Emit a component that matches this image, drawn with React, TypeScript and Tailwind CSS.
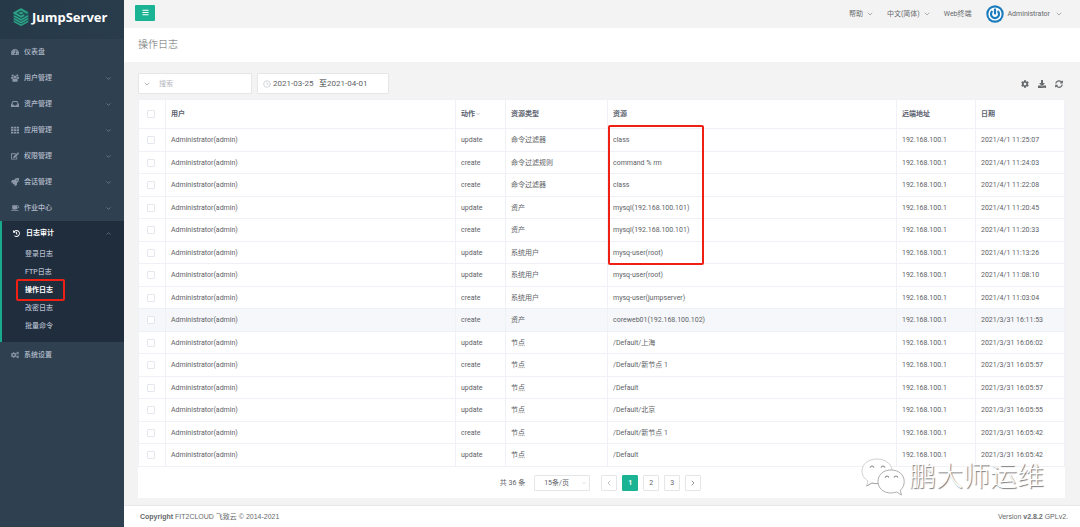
import React from 'react';
import {
  FaBars,
  FaTachometerAlt,
  FaEdit,
  FaRocket,
  FaCoffee,
  FaHistory,
  FaCogs,
  FaCog,
  FaDownload,
  FaSyncAlt,
} from 'react-icons/fa';
import { ChevronDown, ChevronLeft, ChevronRight, ChevronUp, Clock } from 'lucide-react';

function UsersIcon({ className }: { className?: string }) {
  return (
    <svg viewBox="0 0 16 16" className={className} fill="currentColor">
      <circle cx="3.5" cy="3" r="2.2" />
      <circle cx="12.5" cy="3" r="2.2" />
      <circle cx="8" cy="5.8" r="3" />
      <path d="M0 9.5 V7.5 Q0 5.5 1.5 5.5 L4.5 6 Q4.5 8 5.5 9 L3.5 9.5 Z" />
      <path d="M16 9.5 V7.5 Q16 5.5 14.5 5.5 L11.5 6 Q11.5 8 10.5 9 L12.5 9.5 Z" />
      <path d="M2.5 13.5 Q2.5 9.2 5 9.2 Q8 11 11 9.2 Q13.5 9.2 13.5 13.5 Q13.5 15.5 11.5 15.5 H4.5 Q2.5 15.5 2.5 13.5 Z" />
    </svg>
  );
}

function InboxIcon({ className }: { className?: string }) {
  return (
    <svg viewBox="0 0 16 16" className={className} fill="currentColor" fillRule="evenodd">
      <path d="M3.5 2 H12.5 L16 9 V14 H0 V9 Z M4.7 4 L2.2 9 H5 L6 11 H10 L11 9 H13.8 L11.3 4 Z" />
    </svg>
  );
}

function GridIcon({ className }: { className?: string }) {
  return (
    <svg viewBox="0 0 16 16" className={className} fill="currentColor">
      {[1.5, 6.5, 11.5].map((y) => (
        <path key={y} d={`M0 ${y} h4.6 v3.4 h-4.6 Z M5.7 ${y} h4.6 v3.4 h-4.6 Z M11.4 ${y} h4.6 v3.4 h-4.6 Z`} />
      ))}
    </svg>
  );
}

const menu = [
  { label: '仪表盘', icon: FaTachometerAlt, expandable: false },
  { label: '用户管理', icon: UsersIcon, expandable: true },
  { label: '资产管理', icon: InboxIcon, expandable: true },
  { label: '应用管理', icon: GridIcon, expandable: true },
  { label: '权限管理', icon: FaEdit, expandable: true },
  { label: '会话管理', icon: FaRocket, expandable: true },
  { label: '作业中心', icon: FaCoffee, expandable: true },
];

const auditMenu = ['登录日志', 'FTP日志', '操作日志', '改密日志', '批量命令'];

const logs = [
  { action: 'update', type: '命令过滤器', resource: 'class', date: '2021/4/1 11:25:07' },
  { action: 'create', type: '命令过滤规则', resource: 'command % rm', date: '2021/4/1 11:24:03' },
  { action: 'create', type: '命令过滤器', resource: 'class', date: '2021/4/1 11:22:08' },
  { action: 'update', type: '资产', resource: 'mysql(192.168.100.101)', date: '2021/4/1 11:20:45' },
  { action: 'create', type: '资产', resource: 'mysql(192.168.100.101)', date: '2021/4/1 11:20:33' },
  { action: 'update', type: '系统用户', resource: 'mysq-user(root)', date: '2021/4/1 11:13:26' },
  { action: 'update', type: '系统用户', resource: 'mysq-user(root)', date: '2021/4/1 11:08:10' },
  { action: 'create', type: '系统用户', resource: 'mysq-user(jumpserver)', date: '2021/4/1 11:03:04' },
  { action: 'create', type: '资产', resource: 'coreweb01(192.168.100.102)', date: '2021/3/31 16:11:53' },
  { action: 'update', type: '节点', resource: '/Default/上海', date: '2021/3/31 16:06:02' },
  { action: 'create', type: '节点', resource: '/Default/新节点 1', date: '2021/3/31 16:05:57' },
  { action: 'update', type: '节点', resource: '/Default', date: '2021/3/31 16:05:57' },
  { action: 'update', type: '节点', resource: '/Default/北京', date: '2021/3/31 16:05:55' },
  { action: 'create', type: '节点', resource: '/Default/新节点 1', date: '2021/3/31 16:05:42' },
  { action: 'update', type: '节点', resource: '/Default', date: '2021/3/31 16:05:42' },
];

const cell = 'border-r border-b border-[#eff1f6] px-[5px] text-left';
const checkCell = 'border-r border-b border-[#eff1f6] pr-[2px]';

function Logo() {
  return (
    <svg viewBox="0 0 18 20" className="h-5 w-[18px]" fill="none">
      <path d="M9 0.5 L17 5 V15 L9 19.5 L1 15 V5 Z" fill="#1f5557" />
      <path d="M15.5 6 L9 2.3 L2.5 6 L9 9.7 L12 8" stroke="#2fa58a" strokeWidth="1.7" />
      <path d="M6.5 6 L9 4.7 L11.5 6 L9 7.3 Z" fill="#2fa58a" />
      <path d="M2 8.8 L9 12.8 L16 8.8" stroke="#2fa58a" strokeWidth="1.5" />
      <path d="M2 11.6 L9 15.6 L16 11.6" stroke="#2fa58a" strokeWidth="1.5" />
      <path d="M2 14.4 L9 18.3 L16 14.4" stroke="#2fa58a" strokeWidth="1.3" />
    </svg>
  );
}

function Avatar() {
  return (
    <svg viewBox="0 0 18 18" className="h-[18px] w-[18px]" fill="none">
      <circle cx="9" cy="9" r="8.7" fill="#1a7bbd" />
      <circle cx="9" cy="9" r="6.6" fill="#fff" />
      <path d="M6.4 6 A4 4 0 1 0 11.6 6" stroke="#1a7bbd" strokeWidth="2.2" />
      <path d="M9 3.6 V9.4" stroke="#1a7bbd" strokeWidth="2.2" />
    </svg>
  );
}

function Sidebar() {
  return (
    <aside className="w-[124px] shrink-0 bg-[#2f4050] text-[#b3bccb]">
      <a href="#" className="flex h-[39px] items-center gap-[2px] bg-linear-to-r from-[#263949] to-[#293c4c] pb-[5px] pl-3 text-white">
        <Logo />
        <span className="font-['Noto_Sans',sans-serif] text-[13px] leading-none font-bold">JumpServer</span>
      </a>
      <nav className="font-medium">
        {menu.map(({ label, icon: Icon, expandable }) => (
          <a key={label} href="#" className="flex h-[26px] items-center pr-3 pl-[11px]">
            <Icon className="mr-[5px] size-[8px] opacity-70" />
            <span className="flex-1">{label}</span>
            {expandable && <ChevronDown className="size-[7px] opacity-70" />}
          </a>
        ))}
        <div className="border-l-2 border-[#19aa8d] bg-[#1f2d3d] pb-[7px]">
          <a href="#" className="flex h-6 items-center pr-3 pl-[11px] font-bold text-white">
            <FaHistory className="mr-[6px] size-[7px]" />
            <span className="flex-1">日志审计</span>
            <ChevronUp className="size-[7px] text-[#a7b1c2] opacity-70" />
          </a>
          {auditMenu.map((label) => (
            <a
              key={label}
              href="#"
              className={`relative flex h-[18px] items-center pl-[23px] ${label === '操作日志' ? 'font-bold text-white' : ''}`}
            >
              {label}
              {label === '操作日志' && (
                <span className="absolute -top-[2px] left-[14px] h-[22px] w-[49px] rounded-[2px] border-2 border-[#f01f14]" />
              )}
            </a>
          ))}
        </div>
        <a href="#" className="flex h-[26px] items-center pl-[11px]">
          <FaCogs className="mr-[5px] size-[8px] opacity-70" />
          <span>系统设置</span>
        </a>
      </nav>
    </aside>
  );
}

function TopBar() {
  return (
    <header className="flex h-7 items-center bg-[#f3f3f4] pr-[17px] pl-[11px] text-[#676a6c]">
      <button aria-label="菜单" className="mb-[3px] flex h-4 w-5 items-center justify-center rounded-[1px] bg-[#1ab394] text-white">
        <FaBars className="size-[7px]" />
      </button>
      <div className="ml-auto flex items-center">
        <button className="mr-[13px] flex items-center gap-[3px]">
          帮助
          <ChevronDown className="size-[8px] stroke-[1.5]" />
        </button>
        <button className="mr-[13px] flex items-center gap-[3px]">
          中文(简体)
          <ChevronDown className="size-[8px] stroke-[1.5]" />
        </button>
        <a href="#" className="mr-[14px]">Web终端</a>
        <button className="flex items-center gap-1">
          <Avatar />
          Administrator
          <ChevronDown className="ml-[1px] size-[8px] stroke-[1.5]" />
        </button>
      </div>
    </header>
  );
}

function Toolbar() {
  return (
    <div className="flex items-center text-[#606266]">
      <div className="flex h-[21px] w-[114px] items-center rounded-[1px] border border-[#e5e6e7] bg-white pl-1">
        <ChevronDown className="size-[8px] text-[#909399]" />
        <input
          aria-label="搜索"
          placeholder="搜索"
          className="ml-2 w-20 outline-none placeholder:text-[#b4b8c0]"
        />
      </div>
      <div className="ml-[5px] flex h-[21px] w-[132px] items-center rounded-[1px] border border-[#e5e6e7] bg-white pl-[5px] text-[8px]">
        <Clock className="mr-[2px] size-[8px] text-[#c0c4cc]" />
        <input aria-label="开始日期" defaultValue="2021-03-25" className="w-[46px] outline-none" />
        <span className="text-[#303133]">至</span>
        <input aria-label="结束日期" defaultValue="2021-04-01" className="w-[46px] outline-none" />
      </div>
      <div className="mr-[2px] ml-auto flex items-center gap-[9px] text-[#676a6c]">
        <button aria-label="设置"><FaCog className="size-[8px]" /></button>
        <button aria-label="下载"><FaDownload className="size-[8px]" /></button>
        <button aria-label="刷新"><FaSyncAlt className="size-[8px]" /></button>
      </div>
    </div>
  );
}

function Check({ label }: { label: string }) {
  return (
    <input
      type="checkbox"
      aria-label={label}
      className="mx-auto block size-[8px] appearance-none rounded-[1px] border border-[#e4e7ed] bg-white"
    />
  );
}

function LogTable() {
  return (
    <div className="relative">
      <table className="w-full table-fixed border-separate border-spacing-0 border-t border-l border-[#eff1f6]">
        <colgroup>
          <col className="w-[27px]" />
          <col />
          <col className="w-[50px]" />
          <col className="w-[102px]" />
          <col className="w-[289px]" />
          <col className="w-[79px]" />
          <col className="w-[89px]" />
        </colgroup>
        <thead>
          <tr className="h-[29px] font-bold text-[#5c6270]">
            <th className={checkCell}><Check label="全选" /></th>
            <th className={cell}>用户</th>
            <th className={cell}>
              <span className="flex items-center">
                动作
                <ChevronDown className="size-[6px] text-[#909399]" />
              </span>
            </th>
            <th className={cell}>资源类型</th>
            <th className={cell}>资源</th>
            <th className={cell}>远端地址</th>
            <th className={cell}>日期</th>
          </tr>
        </thead>
        <tbody>
          {logs.map((log, index) => (
            <tr key={index} className={`h-[22px] odd:h-[23px] ${index === 8 ? 'bg-[#f5f7fa]' : ''}`}>
              <td className={checkCell}><Check label={`选择第${index + 1}行`} /></td>
              <td className={cell}>Administrator(admin)</td>
              <td className={cell}>{log.action}</td>
              <td className={cell}>{log.type}</td>
              <td className={cell}>{log.resource}</td>
              <td className={cell}>192.168.100.1</td>
              <td className={cell}>{log.date}</td>
            </tr>
          ))}
        </tbody>
      </table>
      {/* highlighted resources */}
      <div className="absolute top-[26px] right-[361px] h-[140px] w-[96px] rounded-[2px] border-2 border-[#f01f14]" />
    </div>
  );
}

function Pagination() {
  const box = 'flex size-4 items-center justify-center rounded-[1px] border';
  return (
    <div className="flex h-[31px] items-center justify-center pr-[2px] text-[#606266]">
      <span>共 36 条</span>
      <span className="relative mr-[11px] ml-[9px] flex items-center">
        <select
          aria-label="每页条数"
          className="h-4 w-14 appearance-none rounded-[1px] border border-[#e5e6e7] bg-white pl-[9px]"
        >
          <option>15条/页</option>
        </select>
        <ChevronDown className="pointer-events-none absolute right-[3px] size-[6px] text-[#c0c4cc]" />
      </span>
      <div className="flex gap-[5px]">
        <button aria-label="上一页" className={`${box} border-[#e5e6e7] text-[#a0a4aa]`}><ChevronLeft className="size-[8px]" /></button>
        <button className={`${box} border-[#1ab394] bg-[#1ab394] font-bold text-white`}>1</button>
        <button className={`${box} border-[#e5e6e7]`}>2</button>
        <button className={`${box} border-[#e5e6e7]`}>3</button>
        <button aria-label="下一页" className={`${box} border-[#e5e6e7]`}><ChevronRight className="size-[8px]" /></button>
      </div>
    </div>
  );
}

function Watermark() {
  return (
    <div className="absolute right-[36px] bottom-[31px] flex items-center gap-1">
      <svg viewBox="0 0 44 38" className="h-[38px] w-11" fill="#fff" stroke="#9a9a9a" strokeWidth="0.8">
        <path d="M16 1 C7 1 1 6.5 1 13 C1 17 3 20.5 7 23 L5.5 28 L11 25 C13 25.6 15 25.8 17 25.6 C23 25 31 19 31 13 C31 6.5 25 1 16 1 Z" stroke="#c4c4c4" />
        <path d="M5.5 28 L11 25 C13 25.6 15 25.8 17 25.6" fill="none" />
        <path d="M30 12 C22 12 17 17 17 23.5 C17 30 22 35 30 35 C32 35 34 34.6 35.5 34 L40.5 37 L39.2 32.3 C42 30 43.2 27 43.2 23.5 C43.2 17 38 12 30 12 Z" />
        <path d="M9 9.5 q2 -3 4 0 M20 9.5 q2 -3 4 0 M24 19.5 q2 -3 4 0 M33 19.5 q2 -3 4 0" fill="none" stroke="#808080" strokeWidth="1.1" />
      </svg>
      <span className="text-[27px] leading-9 font-light text-white [text-shadow:1px_1px_1px_#777]">鹏大师运维</span>
    </div>
  );
}

export default function App() {
  return (
    <div className="relative flex min-h-screen bg-[#f3f3f4] font-[Roboto,'Noto_Sans_CJK_SC',sans-serif] text-[7px] leading-[10px] text-[#606266]">
      <Sidebar />
      <div className="flex min-w-0 flex-1 flex-col">
        <TopBar />
        <div className="flex h-[34px] items-center bg-white pb-[1px] pl-[14px]">
          <h1 className="text-[10px] leading-[14px] font-light text-[#676a6c]">操作日志</h1>
        </div>
        <main className="flex-1 pt-[11px] pr-[15px] pb-[7px] pl-[14px]">
          <Toolbar />
          <div className="mt-[5px] bg-white">
            <LogTable />
            <Pagination />
          </div>
        </main>
        <footer className="flex h-[22px] items-center justify-between border-t border-[#e7eaec] bg-white pr-3 pl-4 font-['Liberation_Sans','Noto_Sans_CJK_SC',sans-serif] text-[#676a6c]">
          <span><strong>Copyright</strong> FIT2CLOUD 飞致云 © 2014-2021</span>
          <span>Version <strong>v2.8.2</strong> GPLv2.</span>
        </footer>
      </div>
      <Watermark />
    </div>
  );
}
